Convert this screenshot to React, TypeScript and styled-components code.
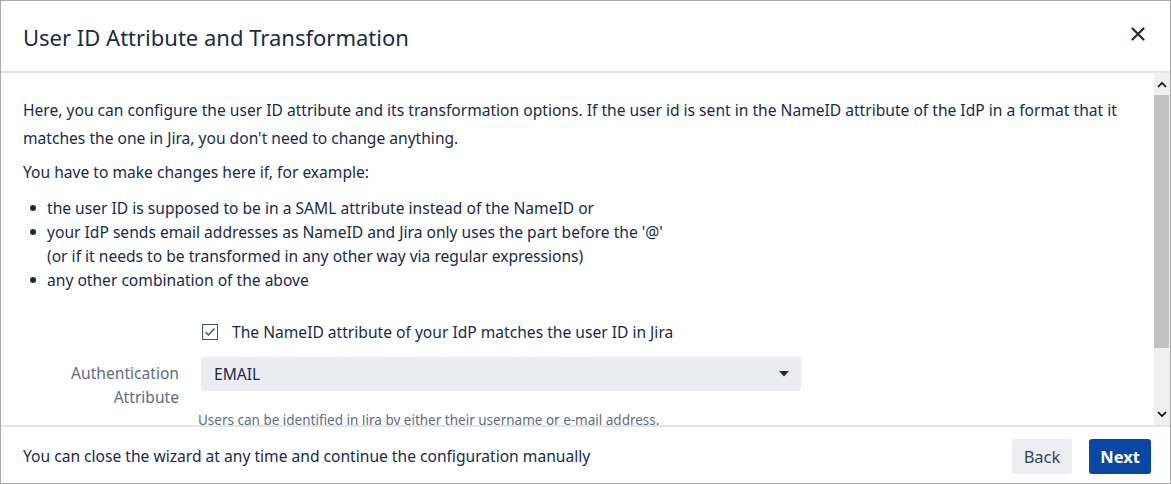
import React from "react";
import styled, { createGlobalStyle } from "styled-components";

const Global = createGlobalStyle`
  html, body { margin: 0; padding: 0; background: #fff; }
  body { font-family: "Noto Sans", "Open Sans", sans-serif; color: #172b4d; }
  * { box-sizing: border-box; }
`;

const Dialog = styled.div`
  width: 1171px;
  height: 484px;
  border: 1px solid #a9a9a9;
  display: flex;
  flex-direction: column;
  background: #fff;
  overflow: hidden;
`;

const Header = styled.header`
  height: 72px;
  flex: none;
  display: flex;
  align-items: center;
  justify-content: space-between;
  padding: 0 22px 0 22px;
  border-bottom: 2px solid #e3e4e8;
`;

const Title = styled.h1`
  margin: 0;
  font-size: 22px;
  font-weight: 400;
  color: #172b4d;
  padding-top: 2px;
`;

const CloseButton = styled.button`
  border: none;
  background: transparent;
  padding: 0;
  width: 20px;
  height: 20px;
  display: flex;
  align-items: center;
  justify-content: center;
  margin-top: -4px;
`;

const Middle = styled.div`
  flex: 1;
  display: flex;
  min-height: 0;
`;

const Content = styled.div`
  flex: 1;
  overflow: hidden;
  padding: 23px 22px 0 22px;
  font-size: 15.6px;
`;

const Para = styled.p`
  margin: 0 0 6px 0;
  line-height: 28px;
`;

const List = styled.ul`
  margin: 10px 0 0 0;
  padding: 0 0 0 24px;
  list-style: none;
`;

const Item = styled.li`
  position: relative;
  line-height: 24px;
  &::before {
    content: "";
    position: absolute;
    left: -17px;
    top: 9px;
    width: 6px;
    height: 6px;
    border-radius: 50%;
    background: #172b4d;
  }
`;

const FormRow = styled.div`
  display: grid;
  grid-template-columns: 156px 600px;
  column-gap: 22px;
  align-items: start;
`;

const CheckRow = styled(FormRow)`
  margin-top: 28px;
`;

const CheckLabel = styled.label`
  display: flex;
  align-items: center;
  gap: 14px;
  line-height: 24px;
  grid-column: 2;
`;

const Box = styled.span`
  width: 16px;
  height: 16px;
  border: 1px solid #42526e;
  display: flex;
  align-items: center;
  justify-content: center;
  margin-left: 1px;
`;

const SelectRow = styled(FormRow)`
  margin-top: 13px;
`;

const FieldLabel = styled.div`
  text-align: right;
  color: #5e6c84;
  line-height: 24px;
  padding-top: 4px;
`;

const Field = styled.div`
  display: flex;
  flex-direction: column;
`;

const Select = styled.div`
  height: 34px;
  background: #ebecf0;
  border-radius: 3px;
  display: flex;
  align-items: center;
  justify-content: space-between;
  padding: 0 12px 0 13px;
  color: #172b4d;
`;

const Help = styled.div`
  font-size: 13.5px;
  color: #5e6c84;
  margin-top: 20px;
  margin-left: -3px;
  line-height: 18px;
`;

const ScrollBar = styled.div`
  width: 16px;
  flex: none;
  background: #f0f0f0;
  display: flex;
  flex-direction: column;
`;

const Arrow = styled.div<{ $h: number }>`
  height: ${(p) => p.$h}px;
  display: flex;
  align-items: center;
  justify-content: center;
`;

const Thumb = styled.div`
  height: 253px;
  background: #c1c1c1;
  margin: 0 1px 0 0;
`;

const Spacer = styled.div`
  flex: 1;
`;

const Footer = styled.footer`
  height: 58px;
  flex: none;
  border-top: 2px solid #e3e4e8;
  display: flex;
  align-items: center;
  padding: 0 19px 0 22px;
  font-size: 15.6px;
`;

const FooterText = styled.span`
  flex: 1;
  padding-top: 2px;
`;

const Button = styled.button<{ $primary?: boolean }>`
  height: 35px;
  border: none;
  border-radius: 3px;
  font-family: inherit;
  font-size: 16.5px;
  padding: 0 ${(p) => (p.$primary ? 11 : 12)}px;
  margin-left: ${(p) => (p.$primary ? 17 : 0)}px;
  background: ${(p) => (p.$primary ? "#0747a6" : "#eceef2")};
  color: ${(p) => (p.$primary ? "#fff" : "#344563")};
  font-weight: ${(p) => (p.$primary ? 700 : 400)};
  margin-top: 2px;
`;

export default function App() {
  return (
    <>
      <Global />
      <Dialog>
        <Header>
          <Title>User ID Attribute and Transformation</Title>
          <CloseButton aria-label="Close">
            <svg width="14" height="14" viewBox="0 0 14 14">
              <path d="M1.5 1.5 L12.5 12.5 M12.5 1.5 L1.5 12.5" stroke="#172b4d" strokeWidth="2.2" strokeLinecap="round" />
            </svg>
          </CloseButton>
        </Header>
        <Middle>
          <Content>
            <Para>
              Here, you can configure the user ID attribute and its transformation options. If the user id is sent in the NameID attribute of the IdP in a format that it matches the one in Jira, you don't need to change anything.
            </Para>
            <Para>You have to make changes here if, for example:</Para>
            <List>
              <Item>the user ID is supposed to be in a SAML attribute instead of the NameID or</Item>
              <Item>
                your IdP sends email addresses as NameID and Jira only uses the part before the '@'
                <br />
                (or if it needs to be transformed in any other way via regular expressions)
              </Item>
              <Item>any other combination of the above</Item>
            </List>
            <CheckRow>
              <CheckLabel>
                <Box>
                  <svg width="12" height="10" viewBox="0 0 12 10">
                    <path d="M1.5 5 L4.5 8 L10.5 1.5" stroke="#42526e" strokeWidth="1.4" fill="none" />
                  </svg>
                </Box>
                The NameID attribute of your IdP matches the user ID in Jira
              </CheckLabel>
            </CheckRow>
            <SelectRow>
              <FieldLabel>
                Authentication
                <br />
                Attribute
              </FieldLabel>
              <Field>
                <Select>
                  <span>EMAIL</span>
                  <svg width="10" height="6" viewBox="0 0 10 6">
                    <path d="M0 0 L10 0 L5 5.5 Z" fill="#172b4d" />
                  </svg>
                </Select>
                <Help>Users can be identified in Jira by either their username or e-mail address.</Help>
              </Field>
            </SelectRow>
          </Content>
          <ScrollBar>
            <Arrow $h={22}>
              <svg width="10" height="7" viewBox="0 0 10 7">
                <path d="M1 6 L5 2 L9 6" stroke="#000" strokeWidth="1.6" fill="none" />
              </svg>
            </Arrow>
            <Thumb />
            <Spacer />
            <Arrow $h={22}>
              <svg width="10" height="7" viewBox="0 0 10 7">
                <path d="M1 1 L5 5 L9 1" stroke="#000" strokeWidth="1.6" fill="none" />
              </svg>
            </Arrow>
          </ScrollBar>
        </Middle>
        <Footer>
          <FooterText>You can close the wizard at any time and continue the configuration manually</FooterText>
          <Button>Back</Button>
          <Button $primary>Next</Button>
        </Footer>
      </Dialog>
    </>
  );
}
